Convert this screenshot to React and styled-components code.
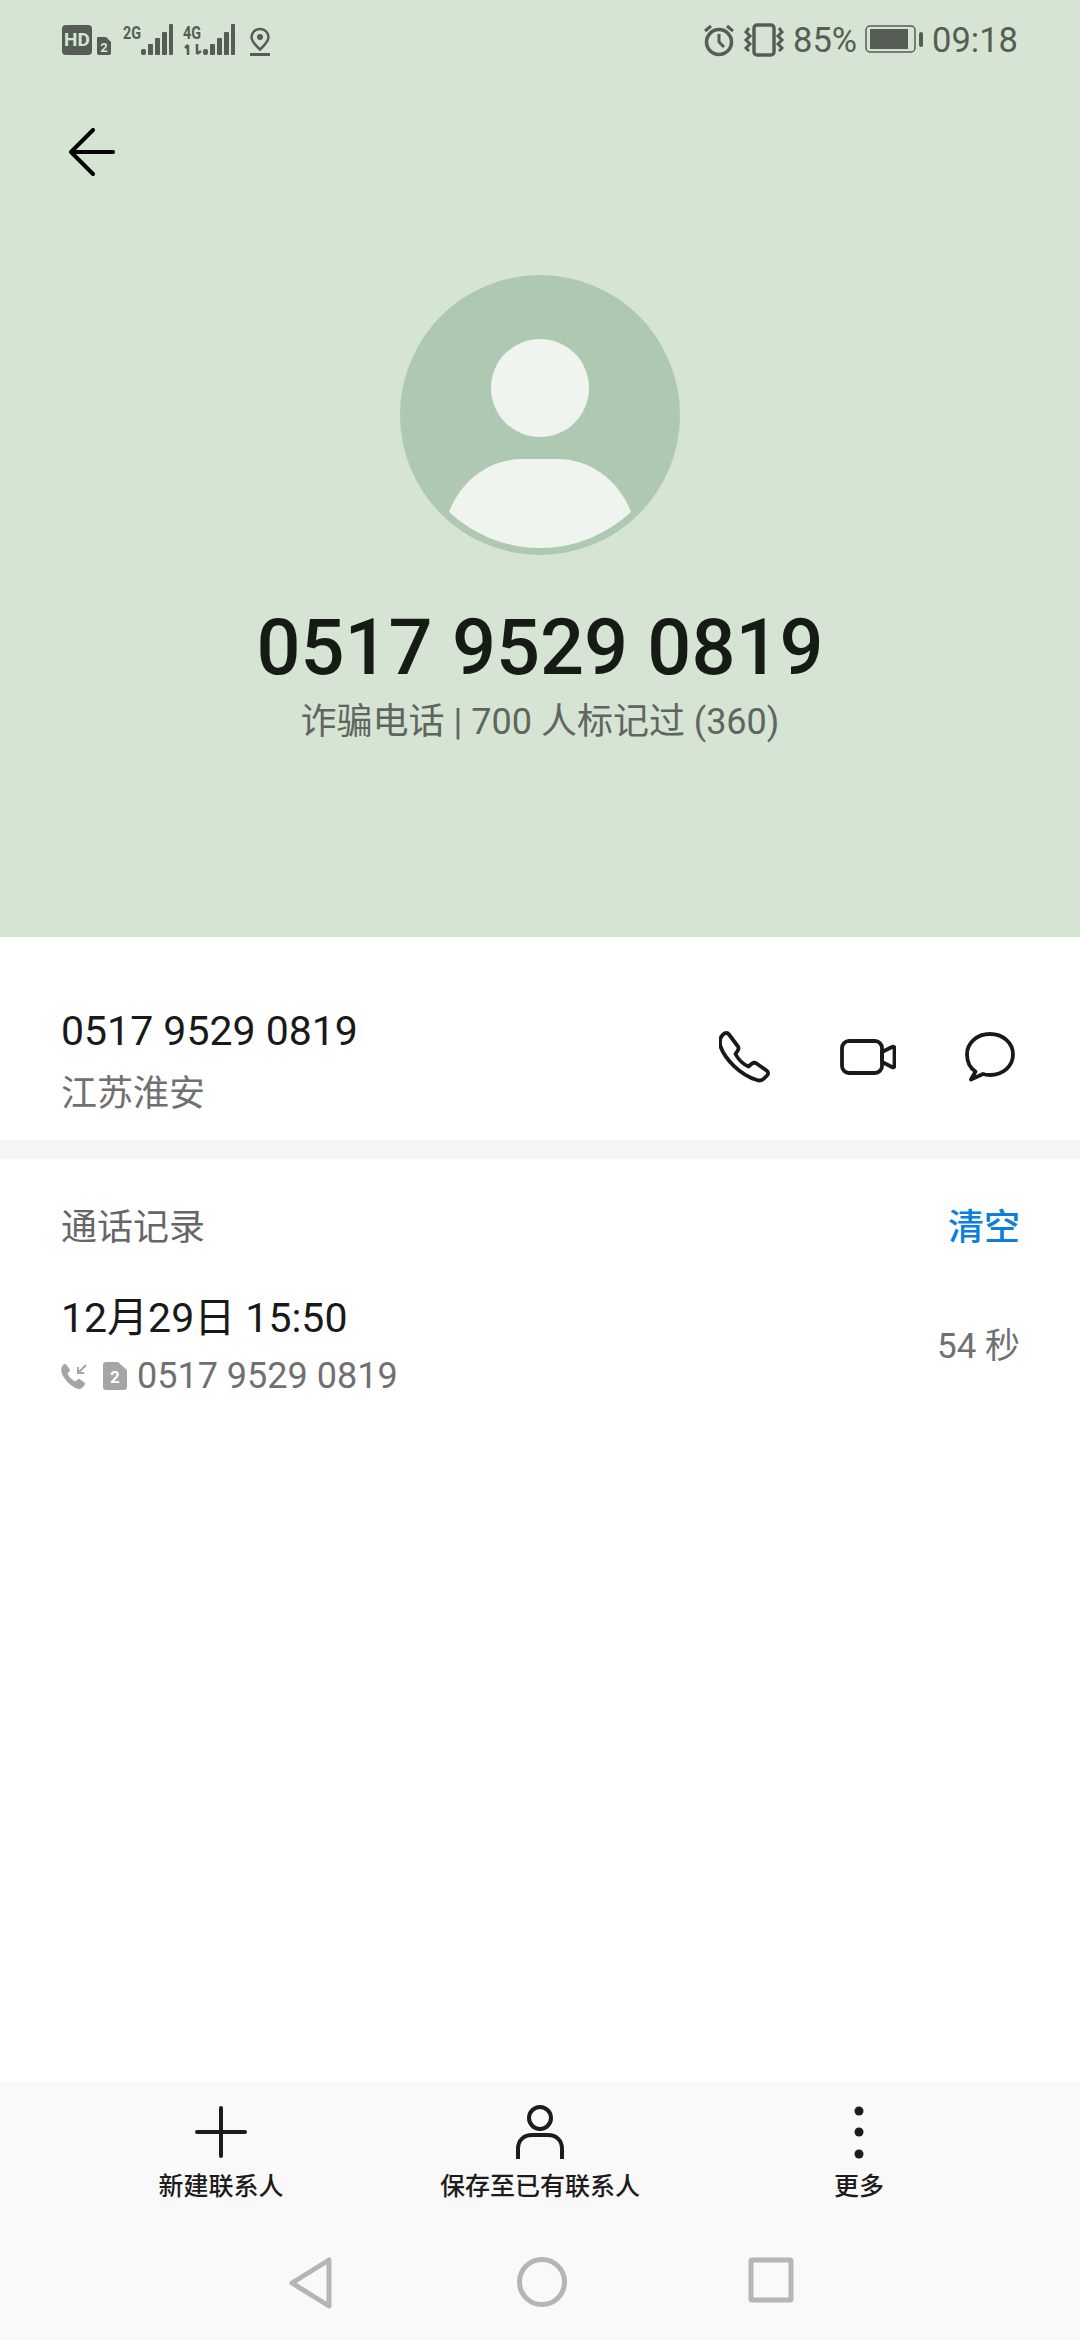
import styled, { createGlobalStyle } from "styled-components";

const Global = createGlobalStyle`
  html, body {
    margin: 0;
    padding: 0;
    background: #fff;
  }
  * { box-sizing: border-box; }
`;

const Page = styled.div`
  width: 1080px;
  height: 2340px;
  display: flex;
  flex-direction: column;
  font-family: Roboto, "Noto Sans CJK SC", sans-serif;
  overflow: hidden;
  background: #fff;
`;

const Header = styled.header`
  height: 937px;
  background: #d5e4d3;
  display: flex;
  flex-direction: column;
  align-items: center;
`;

const StatusBar = styled.div`
  width: 100%;
  height: 80px;
  padding: 0 62px;
  display: flex;
  justify-content: space-between;
  align-items: center;
  color: #555d54;
`;

const StatusGroup = styled.div`
  display: flex;
  align-items: center;
  gap: ${(p) => p.$gap || 10}px;
  svg { display: block; }
`;

const StatusText = styled.span`
  font-size: 34.5px;
  line-height: 40px;
`;

const BackRow = styled.div`
  width: 100%;
  padding: 48px 0 0 68px;
  height: 195px;
  svg { display: block; }
`;

const Avatar = styled.svg`
  display: block;
  width: 280px;
  height: 280px;
`;

const BigNumber = styled.h1`
  margin: 49px 0 0;
  font-size: 77.5px;
  line-height: 88px;
  font-weight: 500;
  color: #161b16;
`;

const Tagline = styled.div`
  margin-top: 7px;
  font-size: 36px;
  line-height: 46px;
  color: #5f665f;
`;

const NumberRow = styled.section`
  height: 203px;
  padding: 36px 65px 0 61px;
  display: flex;
  justify-content: space-between;
  align-items: center;
`;

const NumberInfo = styled.div`
  display: flex;
  flex-direction: column;
  gap: 15px;
  margin-top: 12px;
`;

const PrimaryText = styled.div`
  font-size: 41px;
  line-height: 48px;
  color: #191919;
`;

const SecondaryText = styled.div`
  font-size: ${(p) => p.$size || 36}px;
  line-height: 48px;
  color: #707070;
`;

const Actions = styled.div`
  display: flex;
  align-items: center;
  gap: 69px;
  svg { display: block; }
`;

const Divider = styled.div`
  height: 19px;
  background: #f5f5f5;
`;

const History = styled.section`
  flex: 1;
  padding: 45px 60px 0 61px;
`;

const HistoryHead = styled.div`
  display: flex;
  justify-content: space-between;
  align-items: center;
`;

const HistoryTitle = styled.div`
  font-size: 36px;
  line-height: 48px;
  color: #666;
`;

const ClearLink = styled.a`
  font-size: 36px;
  line-height: 48px;
  font-weight: 500;
  color: #0a7fdc;
`;

const CallRow = styled.div`
  margin-top: 42px;
  display: flex;
  justify-content: space-between;
  align-items: center;
`;

const CallDetail = styled.div`
  display: flex;
  align-items: center;
  margin-top: 10px;
  gap: 10px;
  svg { display: block; }
`;

const CallInfo = styled.div`
  display: flex;
  flex-direction: column;
`;

const Toolbar = styled.nav`
  height: 259px;
  background: #f9f9f9;
  display: flex;
  flex-direction: column;
`;

const ToolRow = styled.div`
  display: grid;
  grid-template-columns: repeat(3, 319px);
  justify-content: center;
  padding-top: 24px;
`;

const Tool = styled.div`
  display: flex;
  flex-direction: column;
  align-items: center;
  gap: 12px;
  svg { display: block; }
`;

const ToolLabel = styled.span`
  font-size: 25px;
  line-height: 32px;
  font-weight: 500;
  color: #1c1c1c;
`;

const SystemNav = styled.div`
  margin-top: 54px;
  display: grid;
  grid-template-columns: 231px 231px 228px;
  justify-content: center;
  justify-items: center;
  svg { display: block; }
`;

const sysColor = "#b5b5b5";
const status = "#555d54";
const ink = "#191919";

const LeftStatusIcons = () => (
  <svg width="212" height="46" viewBox="0 -6 212 46" fill="none">
    <rect x="0" y="2" width="30" height="30" rx="4" fill={status} />
    <text x="15" y="23" fontSize="19" fontWeight="700" textAnchor="middle" fill="#d5e4d3" fontFamily="Roboto">HD</text>
    <path d="M36 14h8l5 5v11a2 2 0 0 1-2 2H37a2 2 0 0 1-2-2V15a1 1 0 0 1 1-1z" fill={status} />
    <text x="42" y="29" fontSize="13" fontWeight="700" textAnchor="middle" fill="#d5e4d3" fontFamily="Roboto">2</text>
    <text x="61" y="16" fontSize="19" fontWeight="700" fill={status} fontFamily="Roboto" textLength="18" lengthAdjust="spacingAndGlyphs">2G</text>
    <g fill={status}>
      <rect x="79" y="26" width="5" height="6" rx="2" />
      <rect x="86" y="21" width="5" height="11" rx="1" />
      <rect x="93" y="15" width="5" height="17" rx="1" />
      <rect x="100" y="9" width="5" height="23" rx="1" />
      <rect x="107" y="1" width="4" height="31" rx="1" />
    </g>
    <text x="121" y="16" fontSize="19" fontWeight="700" fill={status} fontFamily="Roboto" textLength="18" lengthAdjust="spacingAndGlyphs">4G</text>
    <path d="M126 22v10M123 25l3-3M135 21v10M135 31l4-3" stroke={status} strokeWidth="2.5" />
    <g fill={status}>
      <rect x="141" y="26" width="5" height="6" rx="2" />
      <rect x="148" y="21" width="5" height="11" rx="1" />
      <rect x="155" y="15" width="5" height="17" rx="1" />
      <rect x="162" y="9" width="5" height="23" rx="1" />
      <rect x="169" y="1" width="4" height="31" rx="1" />
    </g>
    <path d="M198 6c-5 0-8.500 3.500-8.500 8 0 5 5 9 8.500 12.500 3.500-3.500 8.500-7.500 8.500-12.500 0-4.500-3.500-8-8.500-8z" stroke={status} strokeWidth="2.500" />
    <circle cx="198" cy="14" r="3" fill={status} />
    <rect x="188" y="30" width="20" height="3" fill={status} />
  </svg>
);

const AlarmIcon = () => (
  <svg width="32" height="34" viewBox="0 0 32 34" fill="none" stroke={status}>
    <circle cx="16" cy="19" r="12.500" strokeWidth="3.500" />
    <path d="M16 11v8l5 5" strokeWidth="3" />
    <path d="M2 8l6-5M30 8l-6-5" strokeWidth="3" />
  </svg>
);

const VibrateIcon = () => (
  <svg width="42" height="34" viewBox="0 0 42 34" fill="none" stroke={status}>
    <rect x="11" y="2" width="20" height="30" rx="3" strokeWidth="3.500" />
    <path d="M6 5l-3 4 4 4-4 4 4 4-4 4 3 3M36 5l3 4-4 4 4 4-4 4 4 4-3 3" strokeWidth="3" />
  </svg>
);

const BatteryIcon = () => (
  <svg width="59" height="30" viewBox="0 0 59 30" fill="none">
    <rect x="1" y="1" width="49" height="26" rx="4" stroke={status} strokeWidth="1.500" />
    <rect x="5" y="4" width="38" height="20" fill={status} />
    <rect x="54" y="7" width="4" height="15" rx="2" fill={status} />
  </svg>
);

const BackIcon = () => (
  <svg width="48" height="48" viewBox="0 0 48 48" fill="none" stroke="#000" strokeWidth="4" strokeLinecap="round" strokeLinejoin="round">
    <path d="M45 24H3M25 2L3 24l22 22" />
  </svg>
);

const PhoneIcon = () => (
  <svg width="52" height="52" viewBox="-1 -1 52 52" fill="none" stroke={ink} strokeWidth="3.800" strokeLinejoin="round">
    <path d="M3 2.500C5 .5 7.500 .5 9 2.500l9 12c1 1.500 .5 3-.5 4.500l-2 3c2.500 5 8 10.500 13 12.500l3.500-3c1.500-1 3-1 4.500 0l10 7c2 1.500 2 3.500 .5 5l-3 3c-2 2-4.500 2.500-7 1.500C20 43 5 27 .5 14.500 -.5 10.500 0 5.500 3 2.500z" />
  </svg>
);

const VideoIcon = () => (
  <svg width="56" height="36" viewBox="0 0 56 36" fill="none" stroke={ink} strokeWidth="3.800" strokeLinejoin="round">
    <rect x="2" y="2" width="40" height="32" rx="7" />
    <path d="M42 13l10-5c1.500-.8 2.500 0 2.500 1.500v17c0 1.500-1 2.300-2.500 1.500l-10-5z" />
  </svg>
);

const MessageIcon = () => (
  <svg width="50" height="50" viewBox="0 0 50 50" fill="none" stroke={ink} strokeWidth="3.800" strokeLinejoin="round">
    <path d="M25 2c13 0 23 9 23 20.500S38 43 25 43c-2.500 0-5-.3-7-1l-12 5.500 4.500-8C5 36 2 30 2 22.500 2 11 12 2 25 2z" />
  </svg>
);

const SmallCallIcon = () => (
  <svg width="32" height="27" viewBox="0 0 32 27" fill="#a5a5a5">
    <path d="M2 2c1.500-1.500 3-1 4 .5l2.500 3.500c.8 1.200 .5 2-.5 3l-1.500 1.500c1 3 4.500 6.500 8 8l1.800-1.800c1-.8 1.800-1 3-.2l3.500 2.500c1.500 1 1.500 2.500 .3 3.700l-2 2c-1.500 1.500-3.500 1.500-6 .5C8 22 3 16 .7 10 0 7 0 4 2 2z" />
    <path d="M25 2l-8 8M17 4v6h6" fill="none" stroke="#a5a5a5" strokeWidth="2" />
  </svg>
);

const SimBadge = () => (
  <svg width="24" height="28" viewBox="0 0 24 28">
    <path d="M3 0h12l9 8v17a3 3 0 0 1-3 3H3a3 3 0 0 1-3-3V3a3 3 0 0 1 3-3z" fill="#a5a5a5" />
    <text x="12" y="21" fontSize="17" fontWeight="700" textAnchor="middle" fill="#fff" fontFamily="Roboto">2</text>
  </svg>
);

const PlusIcon = () => (
  <svg width="52" height="54" viewBox="0 -1 52 54" fill="none" stroke="#1c1c1c" strokeWidth="4" strokeLinecap="round">
    <path d="M26 2v48M2 26h48" />
  </svg>
);

const PersonIcon = () => (
  <svg width="48" height="54" viewBox="0 0 48 54" fill="none" stroke="#1c1c1c" strokeWidth="4">
    <circle cx="24" cy="13" r="11" />
    <path d="M2 54V44c0-9 6-14 14-14h16c8 0 14 5 14 14v10" />
  </svg>
);

const MoreIcon = () => (
  <svg width="12" height="54" viewBox="0 0 12 54" fill="#1c1c1c">
    <circle cx="6" cy="6" r="4.500" />
    <circle cx="6" cy="27" r="4.500" />
    <circle cx="6" cy="49" r="4.500" />
  </svg>
);

const tools = [
  { label: "新建联系人", icon: <PlusIcon /> },
  { label: "保存至已有联系人", icon: <PersonIcon /> },
  { label: "更多", icon: <MoreIcon /> },
];

export default function App() {
  return (
    <Page>
      <Global />
      <Header>
        <StatusBar>
          <LeftStatusIcons />
          <StatusGroup $gap={8}>
            <AlarmIcon />
            <VibrateIcon />
            <StatusText>85%</StatusText>
            <BatteryIcon />
            <StatusText>09:18</StatusText>
          </StatusGroup>
        </StatusBar>
        <BackRow>
          <BackIcon />
        </BackRow>
        <Avatar viewBox="0 0 280 280">
          <circle cx="140" cy="140" r="140" fill="#aec8b2" />
          <circle cx="140" cy="113" r="49" fill="#eff4ef" />
          <path d="M49 237C62 203 92 184 122 184H158C188 184 218 203 231 237A133 133 0 0 1 49 237Z" fill="#eff4ef" />
        </Avatar>
        <BigNumber>0517 9529 0819</BigNumber>
        <Tagline>诈骗电话 | 700 人标记过 (360)</Tagline>
      </Header>

      <NumberRow>
        <NumberInfo>
          <PrimaryText>0517 9529 0819</PrimaryText>
          <SecondaryText>江苏淮安</SecondaryText>
        </NumberInfo>
        <Actions>
          <PhoneIcon />
          <VideoIcon />
          <MessageIcon />
        </Actions>
      </NumberRow>
      <Divider />

      <History>
        <HistoryHead>
          <HistoryTitle>通话记录</HistoryTitle>
          <ClearLink>清空</ClearLink>
        </HistoryHead>
        <CallRow>
          <CallInfo>
            <PrimaryText>12月29日 15:50</PrimaryText>
            <CallDetail>
              <SmallCallIcon />
              <SimBadge />
              <SecondaryText $size={36}>0517 9529 0819</SecondaryText>
            </CallDetail>
          </CallInfo>
          <SecondaryText $size={35}>54 秒</SecondaryText>
        </CallRow>
      </History>

      <Toolbar>
        <ToolRow>
          {tools.map((t) => (
            <Tool key={t.label}>
              {t.icon}
              <ToolLabel>{t.label}</ToolLabel>
            </Tool>
          ))}
        </ToolRow>
        <SystemNav>
          <svg width="44" height="52" viewBox="0 0 44 52" fill="none" stroke={sysColor} strokeWidth="5" strokeLinejoin="round">
            <path d="M40 3v46L3 26z" />
          </svg>
          <svg width="50" height="50" viewBox="0 0 50 50" fill="none" stroke={sysColor} strokeWidth="5">
            <circle cx="25" cy="25" r="22.500" />
          </svg>
          <svg width="46" height="46" viewBox="0 0 46 46" fill="none" stroke={sysColor} strokeWidth="5" strokeLinejoin="round">
            <rect x="3" y="3" width="40" height="40" rx="1" />
          </svg>
        </SystemNav>
      </Toolbar>
    </Page>
  );
}
